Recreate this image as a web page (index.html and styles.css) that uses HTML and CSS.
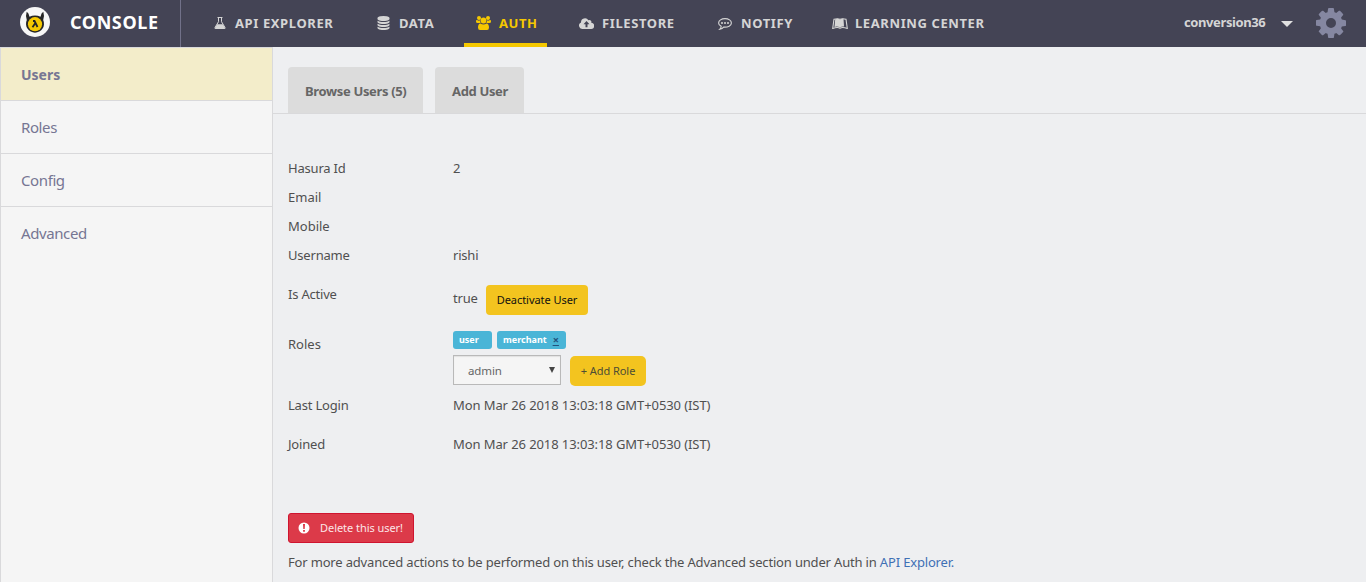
FILE: index.html
```html
<!DOCTYPE html>
<html lang="en">
<head>
<meta charset="utf-8">
<title>Console</title>
<link rel="stylesheet" href="styles.css">
</head>
<body>
<header class="topbar">
  <div class="brand">
    <svg class="logo" viewBox="0 0 30 30"><circle cx="15" cy="15" r="15" fill="#f7f7f7"/><path d="M6.700 4.800Q8.800 6 9.500 9.800Q12 8.400 15 8.400T20.500 9.800Q21.200 6 23.300 4.800Q24.800 9.500 23.200 13A9 9 0 1 1 6.800 13Q5.200 9.500 6.700 4.800Z" fill="#252525"/><circle cx="15" cy="17.200" r="7.100" fill="#f5c800"/><path d="M13 14h1.500l3 6M15.200 16.200l-2.700 4" fill="none" stroke="#252525" stroke-width="1.800"/></svg>
    <span class="brand-name">CONSOLE</span>
  </div>
  <nav class="nav">
    <a class="nav-item nav-api"><svg viewBox="0 0 12 12"><path d="M3.500 .5h5M4.500 1v3.700L1 10.500Q.8 11.500 2 11.500H10Q11.200 11.500 11 10.500L7.500 4.700V1" fill="none" stroke="currentColor"/><path d="M3.200 7.200h5.600L11.500 11.700H.5Z" fill="currentColor"/></svg><span>API EXPLORER</span></a>
    <a class="nav-item nav-data"><svg viewBox="128 0 1536 1792"><path fill="currentColor" d="M896 768q237 0 443-43t325-127v170q0 69-103 128t-280 93.500-385 34.500-385-34.500-280-93.500-103-128v-170q119 84 325 127t443 43zm0 768q237 0 443-43t325-127v170q0 69-103 128t-280 93.500-385 34.500-385-34.500-280-93.500-103-128v-170q119 84 325 127t443 43zm0-384q237 0 443-43t325-127v170q0 69-103 128t-280 93.500-385 34.500-385-34.500-280-93.500-103-128v-170q119 84 325 127t443 43zm0-1152q208 0 385 34.500t280 93.500 103 128v128q0 69-103 128t-280 93.500-385 34.500-385-34.500-280-93.500-103-128v-128q0-69 103-128t280-93.500 385-34.500z"/></svg><span>DATA</span></a>
    <a class="nav-item nav-auth active"><svg viewBox="0 0 15 14"><g fill="currentColor"><circle cx="3" cy="2" r="2"/><circle cx="12" cy="2" r="2"/><circle cx="7.500" cy="4.500" r="2.900"/><path d="M1 4.100Q3 5.100 4.100 4.300Q3.900 6.200 4.700 7H1.500Q0 7 0 5.500Q0 3.300 1 4.100ZM14 4.100Q12 5.100 10.900 4.300Q11.100 6.200 10.300 7H13.500Q15 7 15 5.500Q15 3.300 14 4.100ZM4.400 7.400Q7.500 9.400 10.600 7.400Q13 7.700 13 11.500Q13 14 11 14H4Q2 14 2 11.500Q2 7.700 4.400 7.400Z"/></g></svg><span>AUTH</span></a>
    <a class="nav-item nav-file"><svg viewBox="0 0 15 11"><path fill="currentColor" fill-rule="evenodd" d="M3.500 11A3.400 3.400 0 0 1 2 4.500A4 4 0 0 1 9.400 2.200A2 2 0 0 1 12.200 4.800A3.100 3.100 0 0 1 12 11ZM7.500 3L4.500 6.200H6.500V9.200H8.500V6.200H10.500Z"/></svg><span>FILESTORE</span></a>
    <a class="nav-item nav-notify"><svg viewBox="0 0 14 12"><path d="M7 .6C3.400 .6 .6 2.500 .6 4.900Q.6 7 3.200 8.300Q3.200 10 1.900 11.200Q4.400 10.700 5.600 9.100C10 9.500 13.400 7.600 13.400 4.900C13.400 2.500 10.600 .6 7 .6Z" fill="none" stroke="currentColor" stroke-width="1.100"/><g fill="currentColor"><circle cx="4" cy="4.900" r="1"/><circle cx="7" cy="4.900" r="1"/><circle cx="10" cy="4.900" r="1"/></g></svg><span>NOTIFY</span></a>
    <a class="nav-item nav-learn"><svg viewBox="0 0 16 11"><path d="M8 10.200Q5.500 8.600 .7 10.500L2 1.200Q5.500 .2 8 1.200Q10.500 .2 14 1.200L15.300 10.500Q10.500 8.600 8 10.200Z" fill="none" stroke="currentColor" stroke-width="1.100"/><path d="M3.200 1.300Q6 0 8 1.500Q9.300 .4 11.500 .8L12 8.600Q9.500 8.400 8 9.500Q5.500 8 2.500 8.900Z" fill="currentColor"/></svg><span>LEARNING CENTER</span></a>
  </nav>
  <div class="account"><span class="account-name">conversion36</span><i class="caret"></i>
    <svg class="cog" viewBox="128 128 1536 1536"><path fill="currentColor" d="M1152 896q0-106-75-181t-181-75-181 75-75 181 75 181 181 75 181-75 75-181zm512-109v222q0 12-8 23t-20 13l-185 28q-19 54-39 91 35 50 107 138 10 12 10 25t-9 23q-27 37-99 108t-94 71q-12 0-26-9l-138-108q-44 23-91 38-16 136-29 186-7 28-36 28h-222q-14 0-24.500-8.500t-11.500-21.500l-28-184q-49-16-90-37l-141 107q-10 9-25 9-14 0-25-11-126-114-165-168-7-10-7-23 0-12 8-23 15-21 51-66.500t54-70.500q-27-50-41-99l-183-27q-13-2-21-12.500t-8-23.500v-222q0-12 8-23t19-13l186-28q14-46 39-92-40-57-107-138-10-12-10-24 0-10 9-23 26-36 98.500-107.500t94.500-71.500q13 0 26 10l138 107q44-23 91-38 16-136 29-186 7-28 36-28h222q14 0 24.500 8.500t11.500 21.500l28 184q49 16 90 37l142-107q9-9 24-9 13 0 25 10 129 119 165 170 7 8 7 22 0 12-8 23-15 21-51 66.500t-54 70.500q26 50 41 98l183 28q13 2 21 12.500t8 23.500z"/></svg>
  </div>
</header>
<div class="layout">
  <aside class="sidebar">
    <a class="side-item selected">Users</a>
    <a class="side-item">Roles</a>
    <a class="side-item">Config</a>
    <a class="side-item">Advanced</a>
  </aside>
  <main class="content">
    <div class="tabs"><a class="tab tab-browse"><span>Browse Users (5)</span></a><a class="tab tab-add"><span>Add User</span></a></div>
    <div class="details">
      <div class="row"><span class="label">Hasura Id</span><span>2</span></div>
      <div class="row"><span>Email</span></div>
      <div class="row"><span>Mobile</span></div>
      <div class="row"><span class="label">Username</span><span class="label">rishi</span></div>
      <div class="row row-active"><span class="label">Is Active</span><div class="active-value"><span class="v-true">true</span><button class="btn btn-deactivate">Deactivate User</button></div></div>
      <div class="row row-roles"><span class="role-label">Roles</span>
        <div class="roles">
          <div class="tags"><span class="tag tag-user">user</span><span class="tag tag-merchant">merchant<u>×</u></span></div>
          <div class="role-form"><div class="select"><span>admin</span><i></i></div><button class="btn btn-add">+ Add Role</button></div>
        </div>
      </div>
      <div class="row row-login"><span class="label">Last Login</span><span class="date">Mon Mar 26 2018 13:03:18 GMT+0530 (IST)</span></div>
      <div class="row row-joined"><span class="label">Joined</span><span class="date">Mon Mar 26 2018 13:03:18 GMT+0530 (IST)</span></div>
    </div>
    <button class="btn-delete"><svg viewBox="0 0 12 12"><circle cx="6" cy="6" r="5.500" fill="#fff"/><path d="M5 2h2l-.3 5H5.300ZM5.100 8h1.800v1.700H5.100Z" fill="#dc3545"/></svg><span>Delete this user!</span></button>
    <p class="note">For more advanced actions to be performed on this user, check the Advanced section under Auth in <a>API Explorer.</a></p>
  </main>
</div>
</body>
</html>
```

FILE: styles.css
```css
* { box-sizing: border-box; }
body { margin: 0; height: 582px; overflow: hidden; background: #eeeff1; color: #505050; font: 13px/20px "Noto Sans", "Open Sans", sans-serif; white-space: nowrap; }
button { font: inherit; border: 0; padding: 0; white-space: nowrap; }
.topbar { display: flex; height: 47px; background: #444455; color: #d5d5d5; }
.brand { display: flex; align-items: center; width: 181px; height: 47px; padding: 0 0 3px 20px; border-right: 1px solid #717189; }
.logo { width: 30px; height: 30px; margin-right: 20px; }
.brand-name { color: #fff; font-size: 18px; font-weight: 700; letter-spacing: .6px; }
.nav { display: flex; margin-left: 20px; font-size: 13px; font-weight: 700; letter-spacing: .6px; }
.nav-item { display: flex; align-items: center; height: 47px; padding: 0 0 1px 13px; }
.nav-item svg { flex: none; margin-right: 8px; }
.nav-item.active { color: #f5c800; border-bottom: 4px solid #f5c800; padding: 3px 0 0 12px; }
.nav-api { width: 163px; }
.nav-api svg { width: 12px; height: 12px; margin-right: 9px; }
.nav-data { width: 100px; }
.nav-data svg { width: 13px; height: 14px; margin-right: 9px; }
.nav-auth { width: 83px; margin-right: 19px; }
.nav-auth svg { width: 15px; height: 14px; }
.nav-file { width: 139px; }
.nav-file svg { width: 15px; height: 11px; }
.nav-notify { width: 114px; }
.nav-notify svg { width: 14px; height: 12px; margin: 2px 9px 0 0; }
.nav-learn svg { width: 16px; height: 11px; margin-right: 7px; }
.account { display: flex; align-items: center; margin-left: auto; padding: 0 20px 2px 0; font-size: 13px; font-weight: 700; letter-spacing: -.4px; }
.account-name { width: 97px; padding-bottom: 1px; }
.caret { border: 6px solid transparent; border-top-color: #e1e1e1; border-bottom: 0; margin: 3px 23px 0 0; }
.cog { width: 30px; height: 30px; color: #8587a1; }
.layout { display: flex; height: 535px; }
.sidebar { width: 273px; border: 1px solid #d9d9db; border-bottom: 0; background: #f5f5f5; }
.side-item { display: flex; align-items: center; height: 53px; padding-left: 20px; border-bottom: 1px solid #d9d9db; color: #767693; font-size: 15px; letter-spacing: -.4px; }
.side-item:last-child { border-bottom: 0; padding-bottom: 2px; }
.side-item.selected { background: #f3edca; font-weight: 700; font-size: 14px; letter-spacing: 0; padding-top: 2px; }
.content { flex: 1; }
.tabs { display: flex; gap: 12px; height: 67px; padding: 20px 0 0 15px; border-bottom: 1px solid #d9d9db; }
.tab { display: flex; align-items: center; padding: 2px 0 0 17px; border-radius: 4px 4px 0 0; background: #dcdcdc; color: #666; font-weight: 700; letter-spacing: -.35px; }
.tab-browse { width: 135px; }
.tab-add { width: 89px; }
.details { padding: 40px 0 0 15px; }
.row { display: grid; grid-template-columns: 165px 1fr; height: 29px; padding-top: 4px; }
.label { letter-spacing: -.2px; }
.date { letter-spacing: -.09px; }
.row-active { height: 55px; padding-top: 14px; }
.active-value { display: flex; align-items: center; height: 32px; }
.v-true { width: 33px; padding-bottom: 4px; letter-spacing: -.2px; }
.btn { height: 30px; border-radius: 4px; background: #f3c41f; font-size: 11px; letter-spacing: -.05px; }
.btn-deactivate { width: 102px; color: #111; }
.row-roles { height: 66px; padding-top: 6px; }
.role-label { padding-top: 3px; }
.tags { display: flex; gap: 5px; height: 18px; }
.tag { display: flex; align-items: center; padding-left: 6px; border-radius: 3px; background: #4ab5d7; color: #fff; font-size: 9px; font-weight: 700; }
.tag-user { width: 39px; }
.tag-merchant { width: 69px; }
.tag u { margin-left: 6px; color: #23527c; font-size: 11px; }
.role-form { display: flex; gap: 9px; margin-top: 6px; }
.select { display: flex; align-items: center; width: 108px; height: 30px; padding: 2px 0 0 14px; border: 1px solid #b9b9b9; background: #f5f5f5; box-shadow: inset 0 1px 1px rgba(0,0,0,.08); color: #666; font-size: 11.5px; letter-spacing: -.1px; }
.select span { width: 81px; }
.select i { border: 3px solid transparent; border-top: 6px solid #444; border-bottom: 0; margin-bottom: 3px; }
.btn-add { width: 76px; margin-top: 1px; border-radius: 5px; color: #4d4d35; }
.row-login { height: 39px; padding-top: 4px; }
.row-joined { height: 39px; padding-top: 4px; }
.btn-delete { display: flex; align-items: center; width: 126px; height: 30px; margin: 44px 0 0 15px; padding-left: 9px; border: 1px solid #cf142f; border-radius: 3px; background: #dc3a49; color: #fbe5e7; font-size: 11px; letter-spacing: -.05px; }
.btn-delete svg { width: 12px; height: 12px; margin-right: 10px; }
.note { margin: 9px 0 0 15px; letter-spacing: -.17px; }
.note a { color: #3f70b5; }
```
